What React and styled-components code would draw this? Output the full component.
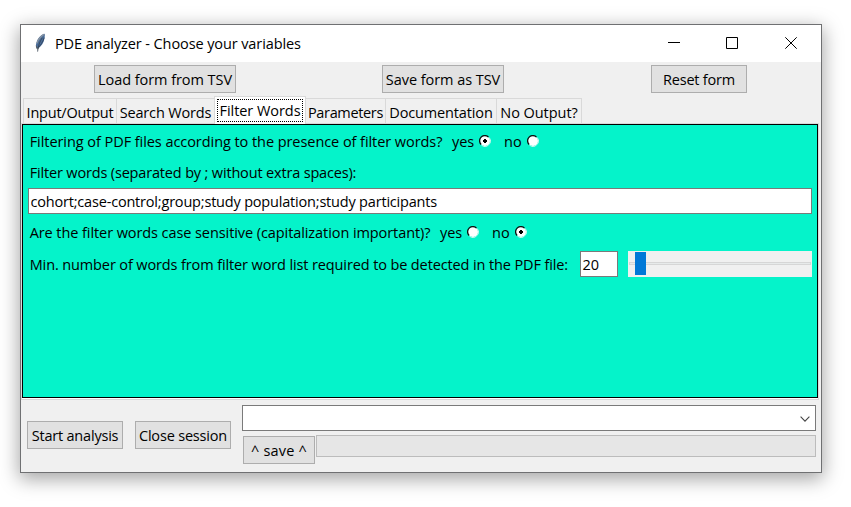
import React, { useState } from "react";
import styled, { createGlobalStyle, css } from "styled-components";

const colors = {
  face: "#f0f0f0",
  button: "#e1e1e1",
  buttonBorder: "#adadad",
  fieldBorder: "#7a7a7a",
  line: "#d9d9d9",
  panel: "#05f3ca",
  accent: "#0078d7",
};

const GlobalStyle = createGlobalStyle`
  * { box-sizing: border-box; }
  html, body { margin: 0; background: #fff; overflow: hidden; }
  body {
    font: 14.5px/20px "Open Sans", "Noto Sans", sans-serif;
    color: #000;
  }
`;

const Desktop = styled.div`
  width: 851px;
  height: 507px;
  padding: 24px 0 0 20px;
  overflow: hidden;
`;

const Window = styled.main`
  display: flex;
  flex-direction: column;
  width: 802px;
  height: 449px;
  border: 1px solid #6f7072;
  background: ${colors.face};
  box-shadow: 0 5px 18px 1px rgba(0, 0, 0, 0.36);
`;

const Text = styled.span`
  padding-top: 2px;
  white-space: pre;
  letter-spacing: ${(p) => p.$track || 0}px;
`;

const TitleBar = styled.header`
  display: flex;
  align-items: center;
  height: 37px;
  flex: none;
  padding: 0 23px 1px 12px;
  background: #fff;
`;

const FeatherSvg = styled.svg`
  display: block;
  margin-right: 6px;
`;

const Title = styled(Text)`
  flex: 1;
`;

const WindowControls = styled.div`
  display: flex;
  gap: 46px;

  svg { display: block; }
  svg:last-child { margin-left: 1px; }
`;

const Toolbar = styled.div`
  display: flex;
  flex: none;
  height: 34px;
  padding: 3px 0 0 73px;
`;

const Button = styled.button`
  display: flex;
  align-items: center;
  justify-content: center;
  flex: none;
  width: ${(p) => p.$w}px;
  height: 28px;
  margin: 0 ${(p) => p.$gap || 0}px 0 0;
  padding: 0;
  border: 1px solid ${colors.buttonBorder};
  background: ${colors.button};
  color: inherit;
  font: inherit;
`;

const TabStrip = styled.nav`
  display: flex;
  align-items: flex-end;
  flex: none;
  height: 28px;
  padding-left: 2px;
  margin-bottom: -1px;
  z-index: 1;
`;

const Tab = styled.button`
  display: flex;
  align-items: center;
  justify-content: center;
  width: ${(p) => p.$w}px;
  height: 26px;
  padding: 1px 0 0;
  border: solid ${colors.line};
  border-width: 1px 1px 1px 0;
  background: ${colors.face};
  color: inherit;
  font: inherit;

  &:first-child { border-left-width: 1px; }

  ${(p) =>
    p.$beforeActive &&
    css`
      border-right-width: 0;
    `}

  ${(p) =>
    p.$active &&
    css`
      height: 28px;
      padding: 0;
      border-width: 1px 1px 0 1px;
      background: #fff;
    `}
`;

const FocusRing = styled.span`
  display: flex;
  align-items: center;
  justify-content: center;
  width: 86px;
  height: 23px;
  padding-bottom: 2px;
  border: 1px dotted #000;
`;

const Pane = styled.section`
  flex: none;
  width: 798px;
  height: 277px;
  padding-bottom: 1px;
  border: 1px solid ${colors.line};
  background: #fff;
`;

const Panel = styled.div`
  display: flex;
  flex-direction: column;
  height: 274px;
  padding: 6px 5px 0;
  border: 1px solid #000;
  background: ${colors.panel};
`;

const Row = styled.div`
  display: flex;
  align-items: center;
  flex: none;
  height: ${(p) => p.$h || 20}px;
  margin-bottom: ${(p) => p.$after || 0}px;
  padding-left: 1.7px;
`;

const Question = styled(Text)`
  flex: none;
  width: ${(p) => p.$w}px;
`;

const Option = styled.label`
  display: flex;
  align-items: center;
  gap: 5px;
  width: ${(p) => p.$w}px;

  svg { display: block; }
`;

const Field = styled.input`
  flex: none;
  width: ${(p) => p.$w}px;
  height: 26px;
  margin: 0 0 ${(p) => p.$after || 0}px;
  padding: 0 2px 0 1.5px;
  border: 1px solid ${colors.fieldBorder};
  border-radius: 0;
  outline: none;
  background: #fff;
  color: #000;
  font: inherit;
  letter-spacing: ${(p) => p.$track || 0}px;
`;

const Slider = styled.div`
  display: grid;
  align-items: center;
  width: 184px;
  height: 26px;
  margin-left: 10px;
  padding: 0 1px;
  background: ${colors.face};
`;

const Trough = styled.div`
  grid-area: 1 / 1;
  height: 3px;
  margin-top: -1px;
  border: 1px solid #d6d6d6;
  background: #e7eaea;
`;

const Thumb = styled.div`
  grid-area: 1 / 1;
  width: 11px;
  height: 23px;
  margin: -1px 0 0 6px;
  background: ${colors.accent};
`;

const Footer = styled.footer`
  display: flex;
  flex: 1;
  padding: 5px 5px 0 6px;
`;

const Actions = styled.div`
  display: flex;
  flex: none;
  width: 215px;
  padding-top: 16px;
`;

const Output = styled.div`
  width: 574px;
`;

const Combo = styled.div`
  display: flex;
  align-items: center;
  justify-content: flex-end;
  height: 26px;
  padding: 1px 5px 0 0;
  border: 1px solid ${colors.fieldBorder};
  background: #fff;
`;

const SaveLine = styled.div`
  display: flex;
  padding: 5px 0 0 1px;
`;

const Progress = styled.div`
  flex: 1;
  height: 22px;
  margin: -1px 0 0 1px;
  border: 1px solid #bcbcbc;
  background: #e6e6e6;
`;

const Feather = () => (
  <FeatherSvg width="16" height="20" viewBox="0 0 16 20">
    <path d="M11.6 0.8C8.8 1.4 5.4 4.2 3.9 8.2C2.9 10.8 2.6 13.4 3.4 15.6L5.4 15.4C8.6 12.8 11 9.2 11.5 5.4C11.7 3.6 12.1 2 11.6 0.8Z" fill="#4a6d9a" />
    <path d="M11.2 1.3C8.4 3 5.2 6.6 3.9 10.2" stroke="#8994a0" strokeWidth="1.3" fill="none" />
    <path d="M11.2 4.6C9.9 9 7.5 12.4 4.9 14.9" stroke="#33455e" strokeWidth="0.9" fill="none" />
    <path d="M9.2 4.8C6.8 8.6 5 13 4.6 18.6" stroke="#34404e" strokeWidth="0.8" fill="none" />
    <path d="M3.2 12.8L4.5 16.2L5.6 15.3" stroke="#5b5e60" strokeWidth="1" fill="none" />
  </FeatherSvg>
);

const RadioGlyph = ({ checked }) => (
  <svg width="12" height="12" viewBox="0 0 12 12">
    <circle cx="6" cy="6" r="5" fill="#fff" />
    <path d="M2.1 9.5A5.2 5.2 0 0 1 9.5 2.1" stroke="#101010" strokeWidth="1.3" fill="none" />
    <path d="M10.1 2.5A5.4 5.4 0 0 1 2.5 10.1" stroke="#cdf7ee" strokeWidth="1" fill="none" />
    {checked && <path d="M5 4H7V5H8V7H7V8H5V7H4V5H5Z" fill="#000" shapeRendering="crispEdges" />}
  </svg>
);

const YesNo = ({ value, onChange }) => (
  <>
    <Option $w={52} onClick={() => onChange("yes")}>
      <Text $track={-0.1}>yes</Text>
      <RadioGlyph checked={value === "yes"} />
    </Option>
    <Option $w={40} onClick={() => onChange("no")}>
      <Text>no</Text>
      <RadioGlyph checked={value === "no"} />
    </Option>
  </>
);

const tabs = [
  { label: "Input/Output", width: 94, track: -0.22 },
  { label: "Search Words", width: 97, track: -0.15 },
  { label: "Filter Words", width: 92, track: -0.05 },
  { label: "Parameters", width: 80, track: -0.35 },
  { label: "Documentation", width: 111, track: -0.15 },
  { label: "No Output?", width: 85, track: -0.05 },
];

export default function App() {
  const [filtering, setFiltering] = useState("yes");
  const [caseSensitive, setCaseSensitive] = useState("no");
  const active = 2;

  return (
    <Desktop>
      <GlobalStyle />
      <Window>
        <TitleBar>
          <Feather />
          <Title $track={-0.1}>PDE analyzer - Choose your variables</Title>
          <WindowControls>
            <svg width="12" height="12" viewBox="0 0 12 12" stroke="#000">
              <path d="M0 5.5H12" />
            </svg>
            <svg width="12" height="12" viewBox="0 0 12 12" stroke="#000" fill="none">
              <path d="M0.5 0.5H11.5V11.5H0.5Z" />
            </svg>
            <svg width="13" height="12" viewBox="0 0 13 12" stroke="#000">
              <path d="M0.3 0.3L11.7 11.7M11.7 0.3L0.3 11.7" />
            </svg>
          </WindowControls>
        </TitleBar>

        <Toolbar>
          <Button $w={142} $gap={146}><Text $track={-0.05}>Load form from TSV</Text></Button>
          <Button $w={122} $gap={147}><Text $track={-0.05}>Save form as TSV</Text></Button>
          <Button $w={96}><Text $track={-0.2}>Reset form</Text></Button>
        </Toolbar>

        <TabStrip>
          {tabs.map((tab, i) => (
            <Tab key={tab.label} $w={tab.width} $active={i === active} $beforeActive={i === active - 1}>
              {i === active ? (
                <FocusRing><Text $track={tab.track}>{tab.label}</Text></FocusRing>
              ) : (
                <Text $track={tab.track}>{tab.label}</Text>
              )}
            </Tab>
          ))}
        </TabStrip>

        <Pane>
          <Panel>
            <Row $after={11}>
              <Question $w={422.3} $track={-0.06}>
                Filtering of PDF files according to the presence of filter words?
              </Question>
              <YesNo value={filtering} onChange={setFiltering} />
            </Row>
            <Row $after={6}>
              <Text $track={-0.165}>Filter words (separated by ; without extra spaces):</Text>
            </Row>
            <Field
              $w={784}
              $after={8}
              $track={-0.19}
              defaultValue="cohort;case-control;group;study population;study participants"
              spellCheck={false}
            />
            <Row $after={9}>
              <Question $w={410.3} $track={-0.08}>
                Are the filter words case sensitive (capitalization important)?
              </Question>
              <YesNo value={caseSensitive} onChange={setCaseSensitive} />
            </Row>
            <Row $h={26}>
              <Question $w={550.3} $track={-0.12}>
                Min. number of words from filter word list required to be detected in the PDF file:
              </Question>
              <Field $w={38} defaultValue="20" />
              <Slider>
                <Trough />
                <Thumb />
              </Slider>
            </Row>
          </Panel>
        </Pane>

        <Footer>
          <Actions>
            <Button $w={96} $gap={12}><Text $track={-0.2}>Start analysis</Text></Button>
            <Button $w={96}><Text $track={-0.18}>Close session</Text></Button>
          </Actions>
          <Output>
            <Combo>
              <svg width="10" height="6" viewBox="0 0 10 6" fill="none" stroke="#444" strokeWidth="1.1">
                <path d="M0.6 0.7L5 5.1L9.4 0.7" />
              </svg>
            </Combo>
            <SaveLine>
              <Button $w={72}><Text $track={0.2}>^ save ^</Text></Button>
              <Progress />
            </SaveLine>
          </Output>
        </Footer>
      </Window>
    </Desktop>
  );
}
